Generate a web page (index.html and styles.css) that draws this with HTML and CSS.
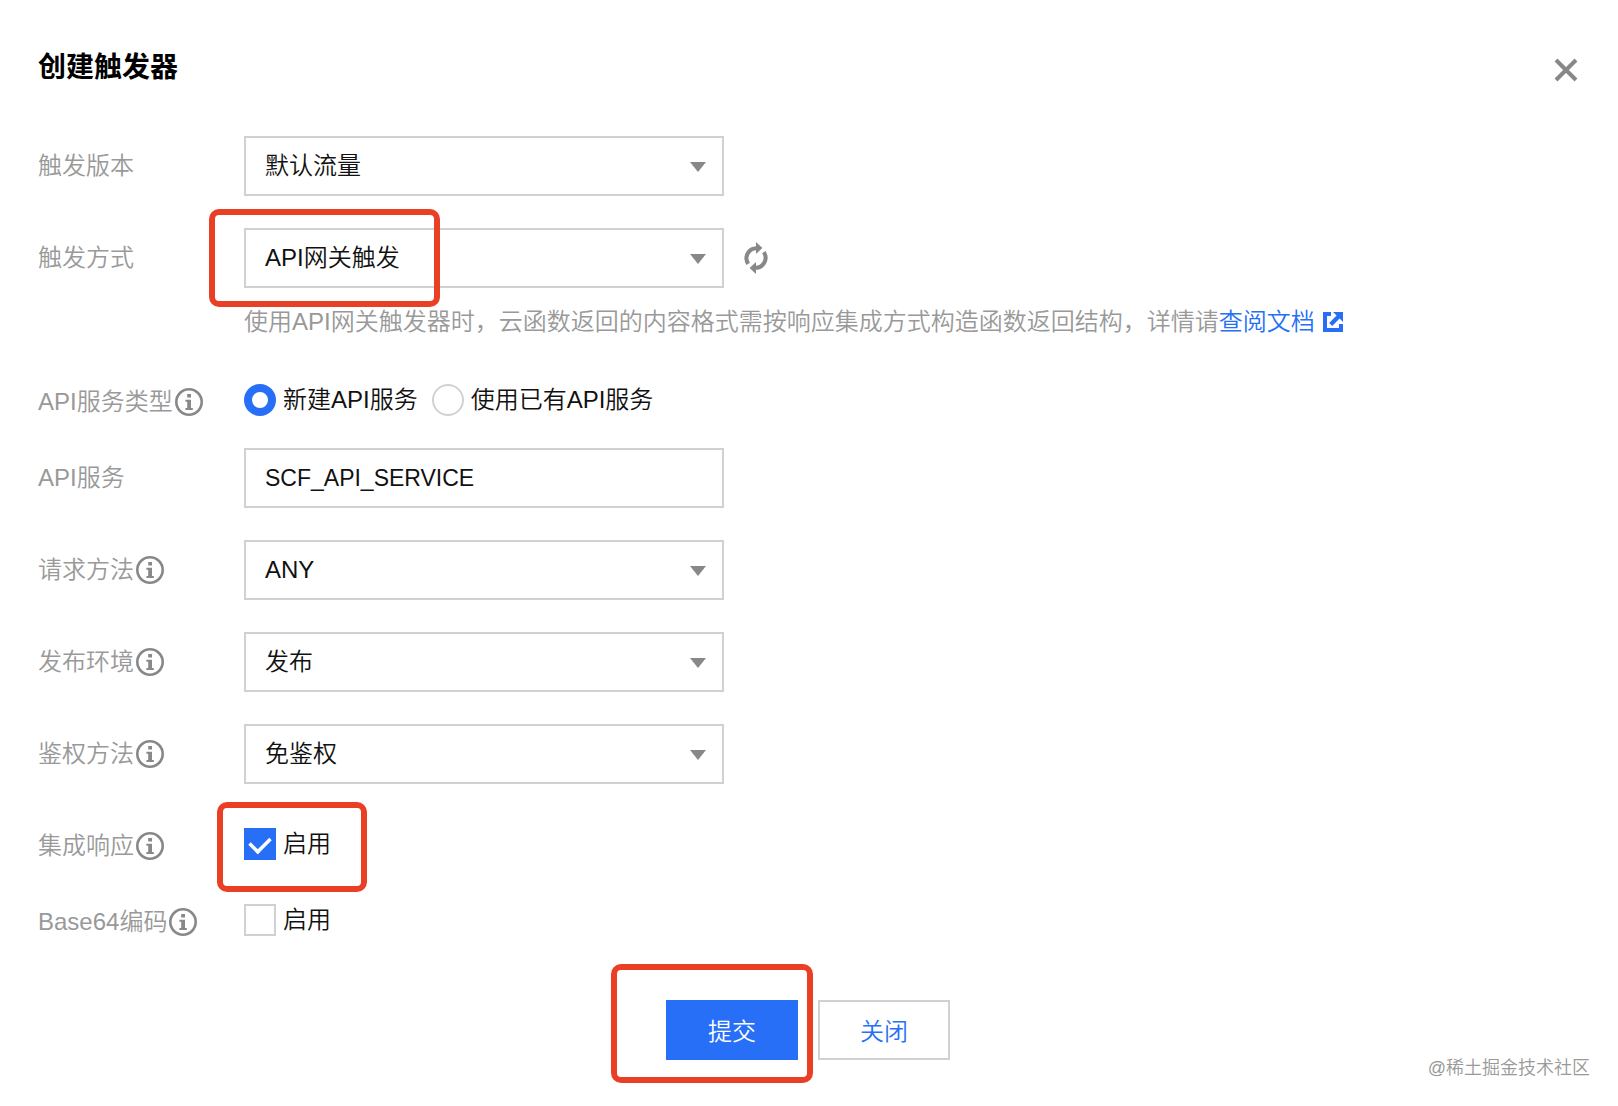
FILE: index.html
```
<!DOCTYPE html>
<html lang="zh-CN">
<head>
    <meta charset="UTF-8">
    <meta name="viewport" content="width=device-width, initial-scale=1.0">
    <title>创建触发器</title>
    <link rel="stylesheet" href="styles.css">
</head>
<body>
    <svg class="sprite" aria-hidden="true">
        <symbol id="icon-info" viewBox="0 0 28 28">
            <circle cx="14" cy="14" r="12.7" fill="none" stroke="#888" stroke-width="2.6"/>
            <path fill="#888" d="M12.2 6h3.8v3.6h-3.8zM10.4 11.8H16v8.2h1.8v2h-7.4v-2h1.8v-6.2h-1.8z"/>
        </symbol>
        <symbol id="icon-arrow" viewBox="0 0 16 10">
            <path fill="#888" d="M0 0h16L8 10z"/>
        </symbol>
    </svg>

    <main class="dialog">
        <header class="dialog-header">
            <h1>创建触发器</h1>
            <button class="close" type="button" aria-label="关闭窗口">
                <svg viewBox="0 0 24 24"><path d="M2 2l20 20M22 2L2 22" stroke="#888" stroke-width="4"/></svg>
            </button>
        </header>

        <form class="form">
            <div class="row">
                <label class="row-label" for="version">触发版本</label>
                <div class="select">
                    <select id="version"><option>默认流量</option></select>
                    <svg class="arrow"><use href="#icon-arrow"/></svg>
                </div>
            </div>

            <div class="row">
                <label class="row-label" for="type">触发方式</label>
                <div class="row-control">
                    <div class="inline">
                        <div class="select">
                            <select id="type"><option>API网关触发</option></select>
                            <svg class="arrow"><use href="#icon-arrow"/></svg>
                            <span class="mark mark-type"></span>
                        </div>
                        <button class="refresh" type="button" aria-label="刷新">
                            <svg viewBox="0 0 24 32">
                                <path d="M4.2 21.8A10 10 0 0 1 12.5 6.2M19.8 10.2A10 10 0 0 1 11.5 25.8" fill="none" stroke="#888" stroke-width="4"/>
                                <path d="M12 0l6.4 6L12 12zM12 20v12l-6.4-6z" fill="#888"/>
                            </svg>
                        </button>
                    </div>
                    <p class="help">使用API网关触发器时，云函数返回的内容格式需按响应集成方式构造函数返回结构，详情请<a href="#">查阅文档<svg class="external" viewBox="0 0 20 20"><path d="M8 0v4H4v12h12v-4h4v8H0V0z" fill="#266ff6"/><path d="M10 0h10v10l-3.4-3.4-7.4 7.4-3-3 7.4-7.4z" fill="#266ff6"/></svg></a></p>
                </div>
            </div>

            <div class="row row-choice" role="radiogroup" aria-labelledby="service-type">
                <span class="row-label" id="service-type">API服务类型<svg class="info"><use href="#icon-info"/></svg></span>
                <div class="choices">
                    <label class="choice"><input type="radio" name="service" checked>新建API服务</label>
                    <label class="choice"><input type="radio" name="service">使用已有API服务</label>
                </div>
            </div>

            <div class="row">
                <label class="row-label" for="service-name">API服务</label>
                <input class="text" type="text" id="service-name" value="SCF_API_SERVICE">
            </div>

            <div class="row">
                <label class="row-label" for="method">请求方法<svg class="info"><use href="#icon-info"/></svg></label>
                <div class="select">
                    <select id="method"><option>ANY</option></select>
                    <svg class="arrow"><use href="#icon-arrow"/></svg>
                </div>
            </div>

            <div class="row">
                <label class="row-label" for="env">发布环境<svg class="info"><use href="#icon-info"/></svg></label>
                <div class="select">
                    <select id="env"><option>发布</option></select>
                    <svg class="arrow"><use href="#icon-arrow"/></svg>
                </div>
            </div>

            <div class="row">
                <label class="row-label" for="auth">鉴权方法<svg class="info"><use href="#icon-info"/></svg></label>
                <div class="select">
                    <select id="auth"><option>免鉴权</option></select>
                    <svg class="arrow"><use href="#icon-arrow"/></svg>
                </div>
            </div>

            <div class="row row-choice">
                <span class="row-label">集成响应<svg class="info"><use href="#icon-info"/></svg></span>
                <div class="choices">
                    <label class="choice"><input type="checkbox" checked>启用</label>
                    <span class="mark mark-response"></span>
                </div>
            </div>

            <div class="row row-choice">
                <span class="row-label">Base64编码<svg class="info"><use href="#icon-info"/></svg></span>
                <div class="choices">
                    <label class="choice"><input type="checkbox">启用</label>
                </div>
            </div>

            <footer class="actions">
                <div class="submit">
                    <button class="btn btn-primary" type="submit">提交</button>
                    <span class="mark mark-submit"></span>
                </div>
                <button class="btn" type="button">关闭</button>
            </footer>
        </form>
    </main>

    <div class="watermark">@稀土掘金技术社区</div>
</body>
</html>
```
FILE: styles.css
```
* {
    box-sizing: border-box;
}
body {
    position: relative;
    min-height: 100vh;
    margin: 0;
    background-color: #fff;
    color: #111;
    font-family: "Liberation Sans", "Noto Sans CJK SC", sans-serif;
    font-size: 24px;
    font-weight: 350;
    line-height: 36px;
}
button, input, select {
    margin: 0;
    font: inherit;
    color: inherit;
}
svg {
    display: block;
}
.sprite {
    position: absolute;
    width: 0;
    height: 0;
}
.dialog {
    padding: 50px 40px 40px 38px;
}
.dialog-header {
    display: flex;
    justify-content: space-between;
    align-items: flex-start;
    margin-bottom: 50px;
}
.dialog-header h1 {
    margin: 0;
    color: #000;
    font-size: 28px;
    font-weight: bold;
    line-height: 36px;
}
.close, .refresh {
    padding: 0;
    border: none;
    background: none;
    cursor: pointer;
}
.close {
    padding-top: 8px;
}
.close svg {
    width: 24px;
    height: 24px;
}

/* form rows */
.row {
    display: grid;
    grid-template-columns: 206px minmax(0, 1fr);
    align-items: start;
    margin-bottom: 32px;
}
.row-choice {
    margin-bottom: 28px;
}
.row-label {
    display: flex;
    align-items: center;
    gap: 2px;
    padding-top: 12px;
    color: #999;
}
.info {
    flex: none;
    width: 28px;
    height: 28px;
}
.inline {
    display: flex;
    align-items: center;
    gap: 20px;
}
.select {
    position: relative;
    width: 480px;
    max-width: 100%;
}
.select select, .text {
    display: block;
    width: 100%;
    height: 60px;
    padding: 0 19px;
    border: 2px solid #cfd2d5;
    border-radius: 0;
    background-color: #fff;
    appearance: none;
}
.text {
    max-width: 480px;
    font-size: 23px;
}
.arrow {
    position: absolute;
    top: 26px;
    right: 18px;
    width: 16px;
    height: 10px;
    pointer-events: none;
}
.refresh svg {
    width: 24px;
    height: 32px;
}
.help {
    margin: 16px 0 0;
    color: #999;
}
.help a {
    color: #266ff6;
    text-decoration: none;
}
.external {
    display: inline-block;
    width: 20px;
    height: 20px;
    margin-left: 8px;
    vertical-align: -2px;
}

/* radio and checkbox */
.choices {
    position: relative;
    display: flex;
    gap: 14px;
    padding-top: 12px;
}
.choice {
    display: flex;
    align-items: center;
    gap: 7px;
    line-height: 32px;
}
.choice input {
    width: 32px;
    height: 32px;
    border: 2px solid #cfd2d5;
    background-color: #fff;
    appearance: none;
}
.choice input[type="radio"] {
    border-radius: 50%;
}
.choice input[type="radio"]:checked {
    border: 8px solid #266ff6;
}
.choice input[type="checkbox"]:checked {
    display: grid;
    place-items: center;
    border-color: #266ff6;
    background-color: #266ff6;
}
.choice input[type="checkbox"]:checked::before {
    content: "";
    width: 18px;
    height: 11px;
    margin-bottom: 4px;
    border: solid #fff;
    border-width: 0 0 4px 4px;
    transform: rotate(-45deg) scale(0.9);
}

/* buttons */
.actions {
    display: flex;
    justify-content: center;
    gap: 20px;
    padding-top: 32px;
}
.submit {
    position: relative;
}
.btn {
    min-width: 132px;
    height: 60px;
    padding: 3px 40px 0;
    border: 2px solid #cfd2d5;
    background-color: #fff;
    color: #266ff6;
    cursor: pointer;
}
.btn-primary {
    border-color: #266ff6;
    background-color: #266ff6;
    color: #fff;
}

/* red highlight boxes */
.mark {
    position: absolute;
    border: 6px solid #e83f25;
    border-radius: 10px;
    pointer-events: none;
}
.mark-type {
    top: -19px;
    left: -35px;
    width: 231px;
    height: 98px;
}
.mark-response {
    top: -14px;
    left: -27px;
    width: 150px;
    height: 90px;
}
.mark-submit {
    top: -36px;
    left: -55px;
    width: 202px;
    height: 119px;
}
.watermark {
    position: absolute;
    right: 28px;
    bottom: 20px;
    color: #999;
    font-size: 18px;
}
```
